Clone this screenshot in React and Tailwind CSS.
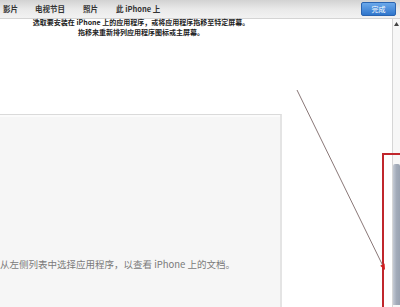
import React from "react";

const cjk = { fontFamily: '"Noto Sans CJK SC", "Noto Sans", sans-serif' };

export default function App() {
  return (
    <div className="relative w-[400px] h-[307px] overflow-hidden bg-white flex flex-col" style={cjk}>
      {/* top tab bar */}
      <div className="h-[19px] shrink-0 flex items-center bg-gradient-to-b from-[#d2d2d2] via-[#e9e9e9] to-[#f2f2f2] border-b border-[#d4d4d4]">
        <div className="flex items-center text-[7.5px] font-bold text-[#333] leading-none">
          <span className="ml-[3px]">影片</span>
          <span className="ml-[17px]">电视节目</span>
          <span className="ml-[18px]">照片</span>
          <span className="ml-[18px]">此 iPhone 上</span>
        </div>
        <div className="ml-auto mr-[4px] w-[35px] h-[14px] rounded-[2px] border border-[#2a64b0] bg-gradient-to-b from-[#6aa8ea] to-[#2f76cc] flex items-center justify-center text-white text-[7px] leading-none">
          完成
        </div>
      </div>

      {/* body */}
      <div className="flex-1 flex min-h-0">
        <div className="flex-1 flex flex-col min-w-0">
          <div className="h-[95px] shrink-0 w-[282px] text-center text-[7px] leading-[10px] font-bold text-[#222]">
            <div className="-mt-[2px]">选取要安装在 iPhone 上的应用程序，或将应用程序拖移至特定屏幕。</div>
            <div>拖移来重新排列应用程序图标或主屏幕。</div>
          </div>
          <div className="flex-1 w-[282px] bg-[#f6f6f6] border-t border-[#dadada] border-r-2 border-r-[#e4e4e4]">
            <div className="h-[2px] bg-[#fbfbfb]" />
            <div className="mt-[141px] text-[9.5px] leading-[12px] text-[#7a7a7a] whitespace-nowrap">
              从左侧列表中选择应用程序，以查看 iPhone 上的文档。
            </div>
          </div>
        </div>
        {/* scrollbar */}
        <div className="w-[8px] shrink-0 border-l border-[#d6d6d6] bg-[#f7f7f7] flex flex-col">
          <div className="h-[10px] flex items-center justify-center">
            <svg width="5" height="4" viewBox="0 0 5 4"><polygon points="2.5,0 5,4 0,4" fill="#444" /></svg>
          </div>
          <div className="h-[135px]" />
          <div className="h-[141px] rounded-t-[2px] bg-gradient-to-r from-[#c4cad4] via-[#a3abb9] to-[#9aa3b2]" />
        </div>
      </div>

      {/* annotation overlays */}
      <div className="absolute left-[382px] top-[153px] w-[40px] h-[200px] border-2 border-[#c0262c]" />
      <svg className="absolute inset-0" width="400" height="307" viewBox="0 0 400 307">
        <line x1="297" y1="90" x2="383" y2="266" stroke="#8a7878" strokeWidth="1" />
        <polygon points="384.6,263.5 380.2,265.7 385,270" fill="#d01c1c" />
      </svg>
    </div>
  );
}
